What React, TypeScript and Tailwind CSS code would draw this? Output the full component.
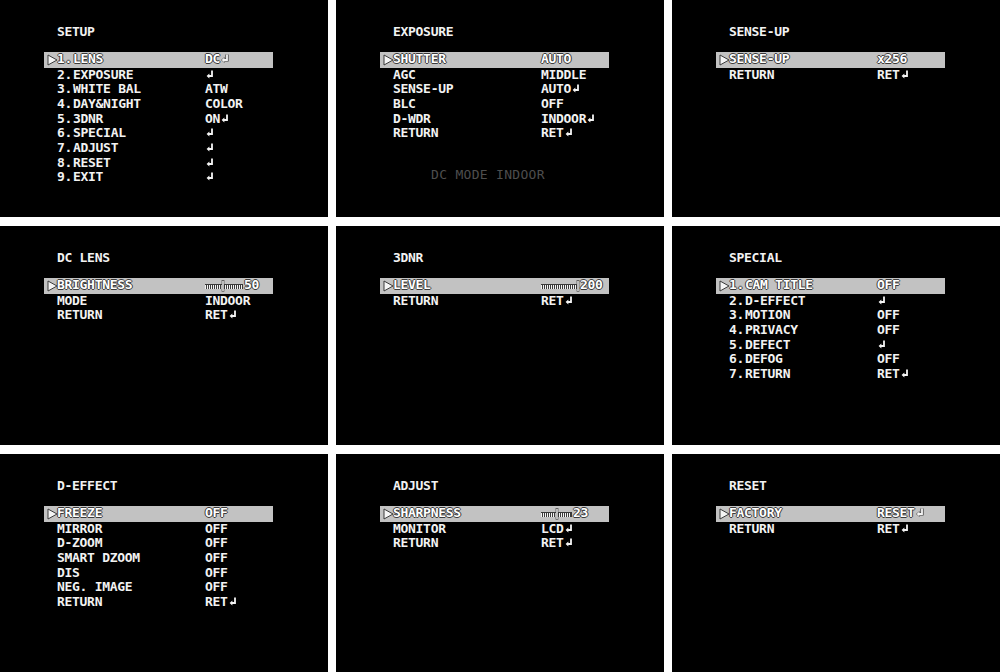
type Slider = { w: number; pos: number; num: string }
type Row = { label: string; value?: string; slider?: Slider }
type Panel = { title: string; numbered?: boolean; rows: Row[]; note?: string }

const r = (label: string, value: string): Row => ({ label, value })

const panels: Panel[] = [
  {
    title: 'SETUP',
    numbered: true,
    rows: [
      r('LENS', 'DC↵'),
      r('EXPOSURE', '↵'),
      r('WHITE BAL', 'ATW'),
      r('DAY&NIGHT', 'COLOR'),
      r('3DNR', 'ON↵'),
      r('SPECIAL', '↵'),
      r('ADJUST', '↵'),
      r('RESET', '↵'),
      r('EXIT', '↵'),
    ],
  },
  {
    title: 'EXPOSURE',
    rows: [
      r('SHUTTER', 'AUTO'),
      r('AGC', 'MIDDLE'),
      r('SENSE-UP', 'AUTO↵'),
      r('BLC', 'OFF'),
      r('D-WDR', 'INDOOR↵'),
      r('RETURN', 'RET↵'),
    ],
    note: 'DC MODE INDOOR',
  },
  { title: 'SENSE-UP', rows: [r('SENSE-UP', 'x256'), r('RETURN', 'RET↵')] },
  {
    title: 'DC LENS',
    rows: [{ label: 'BRIGHTNESS', slider: { w: 38, pos: 18, num: '50' } }, r('MODE', 'INDOOR'), r('RETURN', 'RET↵')],
  },
  { title: '3DNR', rows: [{ label: 'LEVEL', slider: { w: 38, pos: 37, num: '200' } }, r('RETURN', 'RET↵')] },
  {
    title: 'SPECIAL',
    numbered: true,
    rows: [
      r('CAM TITLE', 'OFF'),
      r('D-EFFECT', '↵'),
      r('MOTION', 'OFF'),
      r('PRIVACY', 'OFF'),
      r('DEFECT', '↵'),
      r('DEFOG', 'OFF'),
      r('RETURN', 'RET↵'),
    ],
  },
  {
    title: 'D-EFFECT',
    rows: [
      r('FREEZE', 'OFF'),
      r('MIRROR', 'OFF'),
      r('D-ZOOM', 'OFF'),
      r('SMART DZOOM', 'OFF'),
      r('DIS', 'OFF'),
      r('NEG. IMAGE', 'OFF'),
      r('RETURN', 'RET↵'),
    ],
  },
  {
    title: 'ADJUST',
    rows: [{ label: 'SHARPNESS', slider: { w: 31, pos: 16, num: '23' } }, r('MONITOR', 'LCD↵'), r('RETURN', 'RET↵')],
  },
  { title: 'RESET', rows: [r('FACTORY', 'RESET↵'), r('RETURN', 'RET↵')] },
]

// return-key glyph of the OSD font
const Ret = ({ hi }: { hi?: boolean }) => (
  <svg width="8" height="9" viewBox="0 0 8 9" className="ml-[1px] inline-block align-baseline">
    {hi && (
      <>
        <path d="M6 0.5V6H3" stroke="#3a3a3a" strokeWidth="3.2" fill="none" />
        <polygon points="0,6 3.6,3 3.6,9" fill="#3a3a3a" />
      </>
    )}
    <path d="M6 0.5V6H3" stroke="#f4f4f4" strokeWidth="1.8" fill="none" />
    <polygon points="0.6,6 3.4,3.6 3.4,8.4" fill="#f4f4f4" />
  </svg>
)

const Value = ({ text, hi }: { text: string; hi?: boolean }) => {
  const parts = text.split('↵')
  return (
    <span>
      {parts[0]}
      {parts.length > 1 && <Ret hi={hi} />}
    </span>
  )
}

const Bar = ({ s }: { s: Slider }) => (
  <span className="inline-flex items-center">
    <svg width={s.w + 1} height="12" viewBox={`0 0 ${s.w + 1} 12`} className="inline-block">
      <rect x="0" y="4" width={s.w} height="5" fill="#3a3a3a" />
      {Array.from({ length: Math.floor(s.w / 2) }).map((_, i) => (
        <line key={i} x1={i * 2 + 0.5} x2={i * 2 + 0.5} y1="4" y2="9" stroke="#f4f4f4" strokeWidth="1" />
      ))}
      <line x1="0" x2={s.w} y1="4.5" y2="4.5" stroke="#3a3a3a" strokeWidth="1" />
      <rect x={s.pos - 1} y="0.5" width="2" height="11" fill="#f5f5f5" stroke="#333" strokeWidth="0.6" />
    </svg>
    <span>{s.num}</span>
  </span>
)

const OsdPanel = ({ p }: { p: Panel }) => (
  <div className="bg-black pl-[44px] pt-[25px] font-['DejaVu_Sans_Mono',monospace] text-[13px] font-bold leading-[14.66px] tracking-[-0.3px] text-[#f2f2f2]">
    <div className="pl-[13px]">{p.title}</div>
    <div className="mt-[12px] w-[229px]">
      {p.rows.map((row, i) => {
        const hi = i === 0
        return (
          <div
            key={row.label}
            className={
              hi
                ? 'relative flex h-[16px] items-center bg-[#c2c2c2] pl-[13px] text-white [text-shadow:1px_0_0_#3a3a3a,-1px_0_0_#3a3a3a,0_1px_0_#3a3a3a,0_-1px_0_#3a3a3a]'
                : 'flex h-[14.66px] items-center pl-[13px]'
            }
          >
            {hi && (
              <svg width="11" height="12" viewBox="0 0 11 12" className="absolute left-[3px] top-[2px]">
                <polygon points="1,1 10,6 1,11" fill="#f5f5f5" stroke="#3a3a3a" strokeWidth="1" />
              </svg>
            )}
            <span className="w-[148px] whitespace-pre">
              {p.numbered && <span className="inline-block w-[16px] whitespace-normal">{i + 1}. </span>}
              {row.label}
            </span>
            {row.slider ? <Bar s={row.slider} /> : <Value text={row.value ?? ''} hi={hi} />}
          </div>
        )
      })}
    </div>
    {p.note && (
      <div className="ml-[51px] mt-[27px] font-normal tracking-[0.3px] text-[#4e4e4e]">{p.note}</div>
    )}
  </div>
)

export default function App() {
  return (
    <div className="grid h-[672px] w-[1000px] grid-cols-[328px_328px_328px] grid-rows-[217px_219px_218px] gap-x-[8px] gap-y-[9px] bg-white">
      {panels.map((p) => (
        <OsdPanel key={p.title + p.rows.length} p={p} />
      ))}
    </div>
  )
}
